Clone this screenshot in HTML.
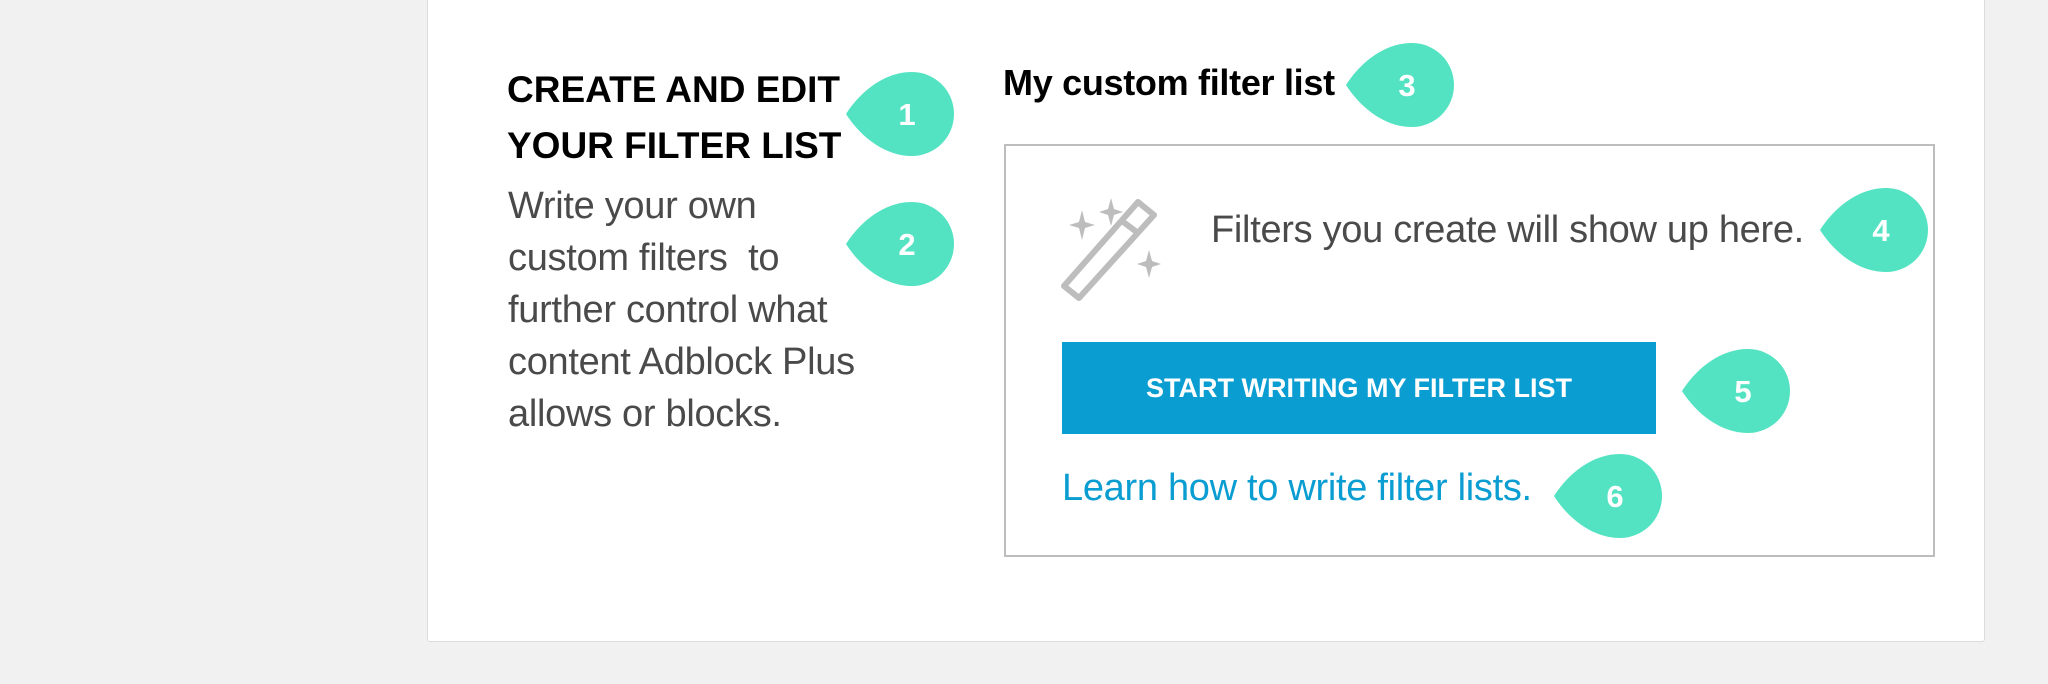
<!DOCTYPE html>
<html><head><meta charset="utf-8"><style>
html,body{margin:0;padding:0}
body{width:2048px;height:684px;background:#f1f1f1;position:relative;overflow:hidden;font-family:"Liberation Sans",sans-serif}
.card{position:absolute;left:427px;top:-10px;width:1556px;height:650px;background:#fff;border:1px solid #dcdcdc;border-radius:3px}
.a{position:absolute;white-space:nowrap}
h1{position:absolute;left:507px;top:62px;margin:0;font-size:37px;line-height:56px;font-weight:bold;color:#000;letter-spacing:0px}
.p{position:absolute;left:508px;top:180px;font-size:38px;line-height:52px;color:#4a4a4a;letter-spacing:-0.3px}
.box{position:absolute;left:1004px;top:144px;width:927px;height:409px;border:2px solid #bdbdbd}
.btn{position:absolute;left:1062px;top:342px;width:594px;height:92px;background:#0a9dd1;color:#fff;font-weight:bold;font-size:27px;line-height:92px;text-align:center}
svg.b{position:absolute;overflow:visible}
</style></head><body>
<div class="card"></div>
<h1>CREATE AND EDIT<br>YOUR FILTER LIST</h1>
<div class="p">Write your own<br>custom filters&nbsp; to<br>further control what<br>content Adblock Plus<br>allows or blocks.</div>
<div class="a" style="left:1003px;top:61px;font-size:36px;line-height:44px;font-weight:bold;color:#000;letter-spacing:-0.3px">My custom filter list</div>
<div class="box"></div>
<svg class="b" style="left:1058px;top:198px" width="106" height="102" viewBox="0 0 106 102">
 <g fill="none" stroke="#bdbdbd" stroke-width="6" stroke-linejoin="round">
  <path d="M6 88 L80 4 L96 17 L21 100 Z"/>
  <path d="M64 23 L80 35"/>
 </g>
 <g fill="#bdbdbd">
  <path d="M24 12 L27 24 L37 27 L27 30 L24 42 L21 30 L11 27 L21 24 Z"/>
  <path d="M53 0 L56 11 L65 14 L56 17 L53 28 L50 17 L41 14 L50 11 Z"/>
  <path d="M91 52 L94 63 L103 66 L94 69 L91 80 L88 69 L79 66 L88 63 Z"/>
 </g>
</svg>
<div class="a" style="left:1211px;top:207px;font-size:38px;line-height:46px;color:#4a4a4a;letter-spacing:-0.3px">Filters you create will show up here.</div>
<div class="btn">START WRITING MY FILTER LIST</div>
<div class="a" style="left:1062px;top:465px;font-size:38px;line-height:46px;color:#0a9dd1;letter-spacing:-0.3px">Learn how to write filter lists.</div>

<svg width="0" height="0" style="position:absolute"><defs><path id="d" d="M-66 0 C-52 -22 -28 -42 0 -42 A42 42 0 0 1 0 42 C-28 42 -52 22 -66 0 Z" fill="#53e3c2"/></defs></svg>
<svg class="b" style="left:912px;top:114px" width="1" height="1"><use href="#d"/><text x="-5" y="11" fill="#fff" font-family="Liberation Sans" font-weight="bold" font-size="31" text-anchor="middle">1</text></svg>
<svg class="b" style="left:912px;top:244px" width="1" height="1"><use href="#d"/><text x="-5" y="11" fill="#fff" font-family="Liberation Sans" font-weight="bold" font-size="31" text-anchor="middle">2</text></svg>
<svg class="b" style="left:1412px;top:85px" width="1" height="1"><use href="#d"/><text x="-5" y="11" fill="#fff" font-family="Liberation Sans" font-weight="bold" font-size="31" text-anchor="middle">3</text></svg>
<svg class="b" style="left:1886px;top:230px" width="1" height="1"><use href="#d"/><text x="-5" y="11" fill="#fff" font-family="Liberation Sans" font-weight="bold" font-size="31" text-anchor="middle">4</text></svg>
<svg class="b" style="left:1748px;top:391px" width="1" height="1"><use href="#d"/><text x="-5" y="11" fill="#fff" font-family="Liberation Sans" font-weight="bold" font-size="31" text-anchor="middle">5</text></svg>
<svg class="b" style="left:1620px;top:496px" width="1" height="1"><use href="#d"/><text x="-5" y="11" fill="#fff" font-family="Liberation Sans" font-weight="bold" font-size="31" text-anchor="middle">6</text></svg>
</body></html>
